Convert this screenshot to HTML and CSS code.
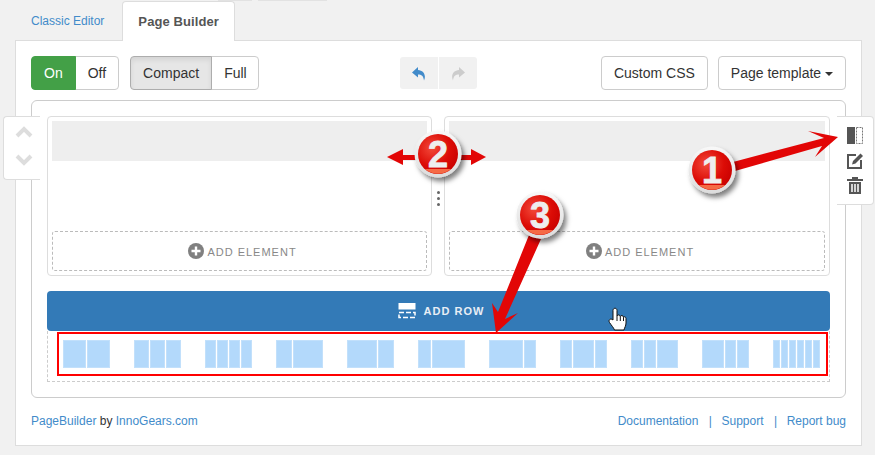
FILE: index.html
```html
<!DOCTYPE html>
<html>
<head>
    <title>Page Builder</title>
    <link rel="stylesheet" href="styles.css">
</head>
<body>
    <div class="tabs">
        <a class="tab">Classic Editor</a>
        <a class="tab tab-active">Page Builder</a>
    </div>

    <div class="panel">
        <div class="toolbar">
            <div class="toolbar-left">
                <div class="btn-group">
                    <button class="btn btn-on">On</button>
                    <button class="btn">Off</button>
                </div>
                <div class="btn-group">
                    <button class="btn btn-active">Compact</button>
                    <button class="btn btn-full">Full</button>
                </div>
            </div>
            <div class="history">
                <button class="history-btn">
                    <svg width="14" height="15" viewBox="0 0 14 15"><path class="undo-icon" d="M6 1 L0 6.5 L6 11.5 V8.5 C9.5 8.5 11.5 10 12 14.5 C14.5 9 11.5 4.5 6 4 Z"/></svg>
                </button>
                <button class="history-btn">
                    <svg width="14" height="15" viewBox="0 0 14 15"><path class="redo-icon" d="M8 1 L14 6.5 L8 11.5 V8.5 C4.5 8.5 2.5 10 2 14.5 C-0.5 9 2.5 4.5 8 4 Z"/></svg>
                </button>
            </div>
            <div class="toolbar-right">
                <button class="btn">Custom CSS</button>
                <button class="btn">Page template <span class="caret"></span></button>
            </div>
        </div>

        <div class="canvas">
            <div class="row">
                <div class="column">
                    <div class="column-head"></div>
                    <div class="add-element">
                        <svg width="16" height="16" viewBox="0 0 16 16"><circle class="plus-disc" cx="8" cy="8" r="8"/><path class="plus-mark" d="M8 3.5 V12.5 M3.5 8 H12.5"/></svg>
                        <span>ADD ELEMENT</span>
                    </div>
                </div>
                <div class="column">
                    <div class="column-head"></div>
                    <div class="add-element">
                        <svg width="16" height="16" viewBox="0 0 16 16"><circle class="plus-disc" cx="8" cy="8" r="8"/><path class="plus-mark" d="M8 3.5 V12.5 M3.5 8 H12.5"/></svg>
                        <span>ADD ELEMENT</span>
                    </div>
                </div>
                <div class="resize-dots"><i></i><i></i><i></i></div>
            </div>

            <button class="add-row">
                <svg width="18" height="16" viewBox="0 0 18 16"><rect class="row-icon-fill" x="0.5" y="0" width="17" height="6.5"/><rect class="row-icon-dash" x="1" y="9.5" width="16" height="5"/></svg>
                <span>ADD ROW</span>
            </button>

            <div class="layouts">
                <div class="layout"><i class="c6"></i><i class="c6"></i></div>
                <div class="layout"><i class="c4"></i><i class="c4"></i><i class="c4"></i></div>
                <div class="layout"><i class="c3"></i><i class="c3"></i><i class="c3"></i><i class="c3"></i></div>
                <div class="layout"><i class="c4"></i><i class="c8"></i></div>
                <div class="layout"><i class="c8"></i><i class="c4"></i></div>
                <div class="layout"><i class="c3"></i><i class="c9"></i></div>
                <div class="layout"><i class="c9"></i><i class="c3"></i></div>
                <div class="layout"><i class="c3"></i><i class="c6"></i><i class="c3"></i></div>
                <div class="layout"><i class="c3"></i><i class="c3"></i><i class="c6"></i></div>
                <div class="layout"><i class="c6"></i><i class="c3"></i><i class="c3"></i></div>
                <div class="layout"><i class="c2"></i><i class="c2"></i><i class="c2"></i><i class="c2"></i><i class="c2"></i><i class="c2"></i></div>
            </div>
        </div>

        <div class="footer">
            <div><a>PageBuilder</a> by <a>InnoGears.com</a></div>
            <div class="footer-links">
                <a>Documentation</a><span>|</span><a>Support</a><span>|</span><a>Report bug</a>
            </div>
        </div>
    </div>

    <!-- row controls, hanging over the canvas edges -->
    <div class="row-move">
        <svg width="18" height="40" viewBox="0 0 18 40"><path class="chevron" d="M2 10 L9 3 L16 10 M2 30 L9 37 L16 30"/></svg>
    </div>
    <div class="row-tools">
        <svg width="17" height="17" viewBox="0 0 17 17"><rect class="tool-fill" x="0" y="0" width="8" height="17"/><rect class="tool-dash" x="9.5" y="0.5" width="6" height="16"/></svg>
        <svg width="17" height="17" viewBox="0 0 17 17"><path class="tool-line" d="M9 3 H1 V16 H14 V8"/><path class="tool-fill" d="M5 12.5 L6 9 L13.5 1.5 L16 4 L8.5 11.5 Z"/></svg>
        <svg width="16" height="17" viewBox="0 0 16 17"><path class="tool-fill" d="M0 2 H5 V0 H11 V2 H16 V4 H0 Z M2 5 H14 V17 H2 Z"/><path class="tool-slots" d="M5 7 V15 M8 7 V15 M11 7 V15"/></svg>
    </div>

    <!-- numbered callouts drawn on top of the screenshot -->
    <div class="red-frame"></div>
    <svg class="callouts" width="875" height="455" viewBox="0 0 875 455">
        <defs>
            <radialGradient id="badgeRed" cx="0.35" cy="0.35" r="0.75">
                <stop offset="0" stop-color="#f2493a"/>
                <stop offset="0.6" stop-color="#dc0c06"/>
                <stop offset="1" stop-color="#c80000"/>
            </radialGradient>
            <linearGradient id="ringGrey" x1="0" y1="0" x2="0" y2="1">
                <stop offset="0" stop-color="#f8f8f8"/>
                <stop offset="1" stop-color="#dcdcdc"/>
            </linearGradient>
            <filter id="badgeShadow" x="-30%" y="-30%" width="170%" height="170%">
                <feDropShadow dx="3" dy="4" stdDeviation="2.5" flood-color="#000" flood-opacity="0.5"/>
            </filter>
            <g id="badge">
                <circle r="23.5" fill="url(#ringGrey)" filter="url(#badgeShadow)"/>
                <circle r="20" fill="url(#badgeRed)"/>
                <path d="M-13 15 A20 20 0 0 0 13 15 Z" fill="#f56a45"/>
            </g>
        </defs>

        <rect class="top-strip" x="218" y="0" width="34" height="1"/>
        <rect class="top-strip" x="258" y="0" width="69" height="1"/>

        <polygon class="arrow" points="733,162 824,138 808,131 838,137 815,157 822,146 735,171"/>
        <polygon class="arrow" points="387,157 403,149 403,155 420,155 420,160 403,160 403,165"/>
        <polygon class="arrow" points="486,157 471,149 471,155 455,155 455,160 471,160 471,165"/>
        <polygon class="arrow" points="529,235 541,239 505,319 518,313 496,333 492,303 498,312"/>

        <use href="#badge" x="712" y="170"/>
        <text class="badge-num" x="712" y="183">1</text>
        <use href="#badge" x="438" y="154"/>
        <text class="badge-num" x="438" y="167">2</text>
        <use href="#badge" x="540" y="215"/>
        <text class="badge-num" x="540" y="228">3</text>

        <path class="hand" d="M613 320 V310.5 C613 307.5 617 307.5 617 310.5 V316 C617.5 314.5 620 314.5 620.3 316.5 C621 315 623.3 315.2 623.5 317.2 C624.3 316.3 626 316.8 626 318.5 V323 C626 326 624.5 327.5 624 330 H614.5 C613.5 327.5 611.5 325.5 609.5 322.5 C608 320 610.5 317.8 613 320 Z M617 316 V321 M620.3 316.5 V321 M623.5 317.2 V321"/>
    </svg>
</body>
</html>
```
FILE: styles.css
```css
body {
    font-family: "Liberation Sans", Arial, sans-serif;
    font-size: 12px;
    color: #333;
    background-color: #f1f1f1;
    margin: 0;
    width: 875px;
    height: 455px;
    position: relative;
    overflow: hidden;
}

a {
    color: #428bca;
}

/* Tabs */
.tabs {
    display: flex;
    align-items: stretch;
    height: 40px;
    margin-top: 1px;
    padding-left: 16px;
    margin-bottom: -1px;
    position: relative;
}

.tab {
    display: flex;
    align-items: center;
    padding: 0 15px;
    margin-right: 3px;
}

.tab-active {
    background-color: #fff;
    border: 1px solid #ddd;
    border-bottom: none;
    border-radius: 4px 4px 0 0;
    color: #555;
    font-size: 13px;
    font-weight: bold;
    letter-spacing: 0.1px;
    height: 40px;
    box-sizing: border-box;
}

/* Main panel */
.panel {
    box-sizing: border-box;
    width: 847px;
    height: 406px;
    margin-left: 15px;
    padding: 15px;
    background-color: #fff;
    border: 1px solid #ddd;
}

.toolbar {
    display: grid;
    grid-template-columns: 1fr auto 1fr;
    align-items: center;
    height: 34px;
}

.toolbar-left {
    display: flex;
    gap: 11px;
}

.toolbar-right {
    display: flex;
    justify-content: flex-end;
    gap: 10px;
}

.btn-group {
    display: flex;
}

.btn-group .btn + .btn {
    margin-left: -1px;
    border-radius: 0 4px 4px 0;
}

.btn-group .btn:first-child {
    border-radius: 4px 0 0 4px;
    position: relative;
    z-index: 1;
}

.btn {
    font-family: inherit;
    font-size: 14px;
    color: #333;
    height: 34px;
    padding: 0 12px;
    background-color: #fff;
    border: 1px solid #ccc;
    border-radius: 4px;
}

.btn-group .btn-full {
    padding-right: 11px;
}

.btn-on {
    background-color: #43a047;
    border-color: #43a047;
    color: #fff;
}

.btn-active {
    background-color: #e6e6e6;
    border-color: #adadad;
    box-shadow: inset 0 3px 5px rgba(0, 0, 0, 0.08);
}

.caret {
    display: inline-block;
    vertical-align: middle;
    margin-left: 0;
    border-top: 4px solid #333;
    border-left: 4px solid transparent;
    border-right: 4px solid transparent;
}

.history {
    display: flex;
    gap: 1px;
}

.history-btn {
    width: 38px;
    height: 32px;
    padding: 0;
    background-color: #f1f1f1;
    border: none;
    display: flex;
    align-items: center;
    justify-content: center;
}

.history-btn:first-child {
    border-radius: 3px 0 0 3px;
}

.history-btn:last-child {
    border-radius: 0 3px 3px 0;
}

.undo-icon {
    fill: #428bca;
}

.redo-icon {
    fill: #ccc;
}

/* Canvas */
.canvas {
    box-sizing: border-box;
    height: 298px;
    margin-top: 10px;
    padding: 15px;
    border: 1px solid #ccc;
    border-radius: 6px;
}

.row {
    display: flex;
    gap: 12px;
    position: relative;
}

.column {
    box-sizing: border-box;
    flex: 1;
    height: 160px;
    padding: 4px;
    border: 1px solid #ddd;
    border-radius: 4px;
    display: flex;
    flex-direction: column;
    justify-content: space-between;
}

.column:first-child {
    flex: 0 0 385px;
}

.column-head {
    height: 40px;
    background-color: #eee;
}

.add-element {
    box-sizing: border-box;
    height: 40px;
    padding-left: 6px;
    border: 1px dashed #bbb;
    border-radius: 3px;
    display: flex;
    align-items: center;
    justify-content: center;
    gap: 3px;
    color: #888;
    font-size: 11px;
    letter-spacing: 1px;
}

.add-element span {
    padding-top: 2px;
}

.plus-disc {
    fill: #808080;
}

.plus-mark {
    stroke: #fff;
    stroke-width: 2.4;
}

.resize-dots {
    position: absolute;
    left: 390px;
    top: 75px;
    display: flex;
    flex-direction: column;
    gap: 3px;
}

.resize-dots i {
    width: 3px;
    height: 3px;
    border-radius: 50%;
    background-color: #666;
}

.add-row {
    box-sizing: border-box;
    width: 100%;
    height: 40px;
    margin-top: 15px;
    padding: 0 0 0 5px;
    background-color: #337ab7;
    border: none;
    border-radius: 4px;
    display: flex;
    align-items: center;
    justify-content: center;
    gap: 8px;
    color: #e8eef5;
    font-family: inherit;
    font-size: 11px;
    font-weight: bold;
    letter-spacing: 1px;
}

.row-icon-fill {
    fill: #fff;
}

.row-icon-dash {
    fill: none;
    stroke: #fff;
    stroke-width: 1.5;
    stroke-dasharray: 5 2;
}

.layouts {
    box-sizing: border-box;
    height: 51px;
    padding: 9px 9px 0 15px;
    border: 1px dashed #ccc;
    border-top: none;
    display: flex;
    gap: 24px;
}

.layout {
    width: 47px;
    height: 28px;
    display: flex;
    gap: 1px;
}

.layout i {
    box-sizing: border-box;
    background-color: #b3d9fb;
    border: 1px solid #c2e0fb;
}

.c2 { flex: 2 2 0; }
.c3 { flex: 3 3 0; }
.c4 { flex: 4 4 0; }
.c6 { flex: 6 6 0; }
.c8 { flex: 8 8 0; }
.c9 { flex: 9 9 0; }

/* Footer */
.footer {
    display: flex;
    justify-content: space-between;
    margin-top: 16px;
    line-height: 14px;
}

.footer-links span {
    color: #428bca;
    margin: 0 9.5px 0 10.5px;
}

/* Hanging row controls */
.row-move {
    box-sizing: border-box;
    position: absolute;
    left: 3px;
    top: 116px;
    width: 37px;
    height: 64px;
    background-color: #fff;
    border: 1px solid #ddd;
    border-right: none;
    border-radius: 4px 0 0 4px;
    padding: 9px 0 0 11px;
}

.chevron {
    fill: none;
    stroke: #ddd;
    stroke-width: 4;
}

.row-tools {
    box-sizing: border-box;
    position: absolute;
    left: 837px;
    top: 116px;
    width: 37px;
    height: 89px;
    background-color: #fff;
    border: 1px solid #ddd;
    border-left: none;
    border-radius: 0 4px 4px 0;
    padding: 10px 0 0 10px;
    display: flex;
    flex-direction: column;
    gap: 8px;
}

.tool-fill {
    fill: #555;
}

.tool-dash {
    fill: none;
    stroke: #777;
    stroke-dasharray: 2 1;
}

.tool-line {
    fill: none;
    stroke: #555;
    stroke-width: 2;
}

.tool-slots {
    stroke: #fff;
    stroke-width: 1.5;
}

/* Callouts */
.red-frame {
    box-sizing: border-box;
    position: absolute;
    left: 57px;
    top: 332px;
    width: 771px;
    height: 44px;
    border: 2px solid #f00;
}

.callouts {
    position: absolute;
    left: 0;
    top: 0;
}

.top-strip {
    fill: #e2e2e2;
}

.arrow {
    fill: #e20606;
}

.badge-num {
    font-family: "Liberation Sans", Arial, sans-serif;
    font-size: 36px;
    font-weight: bold;
    fill: #eee;
    stroke: #eee;
    stroke-width: 0.8;
    text-anchor: middle;
}

.hand {
    fill: #fff;
    stroke: #111;
    stroke-width: 1;
    stroke-linejoin: round;
}
```
